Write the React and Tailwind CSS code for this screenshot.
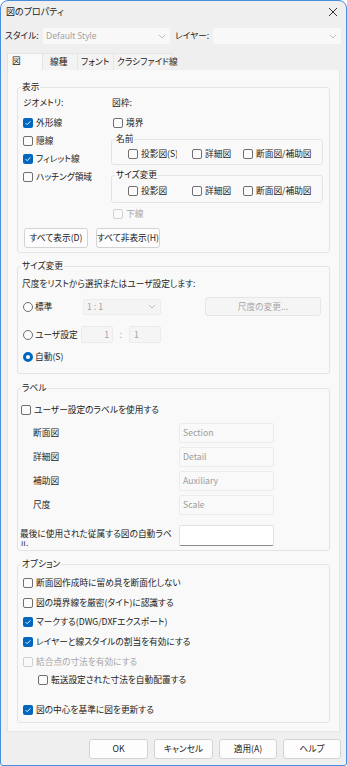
import React from "react";

function Box({ checked, disabled }) {
  if (checked)
    return (
      <span className="w-[10px] h-[10px] rounded-[2px] bg-[#0067c0] flex items-center justify-center shrink-0">
        <svg width="8" height="8" viewBox="0 0 8 8">
          <path d="M1.6 4.1 L3.2 5.7 L6.4 2.3" stroke="white" strokeWidth="0.9" fill="none" />
        </svg>
      </span>
    );
  return (
    <span
      className={
        disabled
          ? "w-[10px] h-[10px] rounded-[2px] border border-[#d0d0d0] bg-[#fafafa] shrink-0"
          : "w-[10px] h-[10px] rounded-[2px] border border-[#6f6f6f] bg-[#fbfbfb] shrink-0"
      }
    />
  );
}

function Check({ label, checked, disabled, className = "", labelClass = "" }) {
  return (
    <div className={"flex items-center gap-[3px] h-[18px] " + className}>
      <Box checked={checked} disabled={disabled} />
      <span className={(disabled ? "text-[#a6a6a6] whitespace-nowrap " : "whitespace-nowrap ") + labelClass}>{label}</span>
    </div>
  );
}

function Radio({ label, selected, className = "" }) {
  return (
    <div className={"flex items-center gap-[2px] " + className}>
      {selected ? (
        <span className="w-[10px] h-[10px] rounded-full border-[3px] border-[#0067c0] bg-white shrink-0" />
      ) : (
        <span className="w-[10px] h-[10px] rounded-full border border-[#6f6f6f] bg-[#fbfbfb] shrink-0" />
      )}
      <span className="whitespace-nowrap">{label}</span>
    </div>
  );
}

function Group({ label, className = "", children }) {
  return (
    <div className={"relative border border-[#e4e4e4] rounded-[3px] " + className}>
      <span className="absolute left-[3px] top-[-7px] px-[1px] bg-[#f9f9f9] leading-[12px] whitespace-nowrap">
        {label}
      </span>
      {children}
    </div>
  );
}

function Chevron() {
  return (
    <svg width="8" height="5" viewBox="0 0 8 5" className="shrink-0">
      <path d="M0.8 0.8 L4 4 L7.2 0.8" stroke="#b8b8b8" strokeWidth="0.9" fill="none" />
    </svg>
  );
}

function Field({ text, className = "" }) {
  return (
    <div
      className={
        "h-[20px] w-[95px] bg-[#f9f9f9] border border-[#ebebeb] rounded-[2px] flex items-center pl-[3px] text-[#9c9c9c] " +
        className
      }
    >
      {text}
    </div>
  );
}

function LabelRow({ label, value }) {
  return (
    <div className="flex items-center mt-[4px] h-[20px]">
      <div className="w-[161px] pl-[15px]">{label}</div>
      <Field text={value} />
    </div>
  );
}

function Btn({ children, className = "" }) {
  return (
    <div
      className={
        "h-[20px] flex items-center justify-center rounded-[3px] border border-[#d3d3d3] bg-[#fdfdfd] whitespace-nowrap " +
        className
      }
    >
      {children}
    </div>
  );
}

export default function App() {
  return (
    <div className="w-[347px] h-[766px] border border-[#4a8ddb] rounded-t-[8px] rounded-b-[3px] bg-[#efefef] overflow-hidden text-[8.7px] leading-[12px] text-[#222222] font-['Noto_Sans_CJK_JP',sans-serif] [font-feature-settings:'palt']">
      {/* title bar */}
      <div className="h-[22px] flex items-center justify-between pl-[5px] pr-[8px]">
        <span className="text-[9px]">図のプロパティ</span>
        <svg width="10" height="10" viewBox="0 0 10 10">
          <path d="M1 1 L9 9 M9 1 L1 9" stroke="#333" strokeWidth="1" />
        </svg>
      </div>

      {/* style row */}
      <div className="flex items-center mt-[5px] h-[16px]">
        <div className="w-[42px] pl-[4px] whitespace-nowrap">スタイル:</div>
        <div className="w-[127px] h-[16px] bg-[#f8f8f8] rounded-[2px] flex items-center justify-between pl-[3px] pr-[4px] text-[#a2a2a2] font-['Noto_Sans',sans-serif] text-[8.5px]">
          <span>Default Style</span>
          <Chevron />
        </div>
        <div className="w-[43px] pl-[5px] whitespace-nowrap">レイヤー:</div>
        <div className="w-[128px] h-[16px] bg-[#f8f8f8] rounded-[2px] flex items-center justify-end pr-[4px]">
          <Chevron />
        </div>
      </div>

      {/* tabs */}
      <div className="flex mt-[9px] pl-[6px] h-[17px] items-stretch">
        <div className="w-[36px] bg-[#f9f9f9] border border-b-0 border-[#e4e4e4] pl-[4px] pt-[1px]">図</div>
        <div className="w-[35px] bg-[#f3f3f3] border-r border-t border-[#e6e6e6] pl-[7px] flex items-center">線種</div>
        <div className="w-[36px] bg-[#f3f3f3] border-r border-t border-[#e6e6e6] pl-[3px] flex items-center">フォント</div>
        <div className="w-[59px] bg-[#f3f3f3] border-r border-t border-[#e6e6e6] pl-[3px] flex items-center whitespace-nowrap">クラシファイド線</div>
      </div>

      {/* tab page */}
      <div className="mx-[6px] h-[662px] bg-[#f9f9f9] border border-t-0 border-[#e6e6e6] px-[9px] pt-[17px]">
        {/* 表示 */}
        <Group label="表示" className="h-[166px]">
          <div className="flex">
            <div className="w-[93px] pl-[5px] pt-[6px]">
              <div className="h-[18px] flex items-center">ジオメトリ:</div>
              <Check label="外形線" checked className="mt-[2px]" />
              <Check label="隠線" />
              <Check label="フィレット線" checked />
              <Check label="ハッチング領域" />
            </div>
            <div className="w-[212px] pt-[6px]">
              <div className="h-[18px] flex items-center pl-[1px]">図枠:</div>
              <Check label="境界" className="mt-[2px] pl-[2px]" />
              <Group label="名前" className="mt-[7px] h-[26px]">
                <div className="flex items-center pt-[4px] h-[24px] pl-[16px]">
                  <Check label="投影図(S)" className="w-[64px]" labelClass="w-[36px] overflow-hidden" />
                  <Check label="詳細図" className="w-[51px]" />
                  <Check label="断面図/補助図" />
                </div>
              </Group>
              <Group label="サイズ変更" className="mt-[10px] h-[28px]">
                <div className="flex items-center pt-[4px] h-[26px] pl-[16px]">
                  <Check label="投影図" className="w-[64px]" />
                  <Check label="詳細図" className="w-[51px]" />
                  <Check label="断面図/補助図" />
                </div>
              </Group>
              <Check label="下線" disabled className="mt-[2px] pl-[2px]" />
            </div>
          </div>
          <div className="flex gap-[8px] pl-[6px] mt-[5px]">
            <Btn className="w-[64px] h-[18px]">すべて表示(D)</Btn>
            <Btn className="w-[64px] h-[18px]">すべて非表示(H)</Btn>
          </div>
        </Group>

        {/* サイズ変更 */}
        <Group label="サイズ変更" className="h-[108px] mt-[13px]">
          <div className="pt-[8px]">
            <div className="h-[18px] flex items-center pl-[4px]">尺度をリストから選択またはユーザ設定します:</div>
            <div className="flex items-center h-[19px] mt-[4px]">
              <Radio label="標準" className="w-[65px] pl-[5px]" />
              <div className="w-[78px] h-[16px] bg-[#f4f4f4] border border-[#ececec] rounded-[2px] flex items-center justify-between pl-[3px] pr-[4px] text-[#a2a2a2]">
                <span>1 : 1</span>
                <Chevron />
              </div>
              <div className="ml-[44px] w-[116px] h-[19px] bg-[#f5f5f5] border border-[#e6e6e6] rounded-[3px] flex items-center justify-center text-[#a6a6a6]">
                尺度の変更...
              </div>
            </div>
            <div className="flex items-center h-[17px] mt-[10px]">
              <Radio label="ユーザ設定" className="w-[63px] pl-[5px]" />
              <div className="w-[32px] h-[17px] bg-[#f5f5f5] border border-[#ebebeb] rounded-[2px] flex items-center justify-end pr-[3px] text-[#a2a2a2]">1</div>
              <div className="w-[16px] text-center text-[#a2a2a2]">:</div>
              <div className="w-[32px] h-[17px] bg-[#f5f5f5] border border-[#ebebeb] rounded-[2px] flex items-center pl-[4px] text-[#a2a2a2]">1</div>
            </div>
            <div className="h-[18px] flex items-center mt-[5px]">
              <Radio label="自動(S)" selected className="pl-[5px]" />
            </div>
          </div>
        </Group>

        {/* ラベル */}
        <Group label="ラベル" className="h-[163px] mt-[14px]">
          <div className="pt-[12px]">
            <Check label="ユーザー設定のラベルを使用する" className="pl-[3px]" />
            <LabelRow label="断面図" value="Section" />
            <LabelRow label="詳細図" value="Detail" />
            <LabelRow label="補助図" value="Auxiliary" />
            <LabelRow label="尺度" value="Scale" />
            <div className="flex items-start mt-[10px]">
              <div className="w-[161px] h-[21px] overflow-hidden pl-[2px] pt-[3px] leading-[11px] whitespace-nowrap">
                最後に使用された従属する図の自動ラベ
                <br />
                ル.
              </div>
              <div className="w-[95px] h-[21px] bg-white border border-[#e2e2e2] border-b-[#8a8a8a] rounded-[2px]" />
            </div>
          </div>
        </Group>

        {/* オプション */}
        <Group label="オプション" className="h-[159px] mt-[13px]">
          <div className="pt-[9px] pl-[5px]">
            <Check label="断面図作成時に留め具を断面化しない" />
            <Check label="図の境界線を厳密(タイト)に認識する" className="mt-[2px]" />
            <Check label="マークする(DWG/DXFエクスポート)" checked className="mt-[1px]" />
            <Check label="レイヤーと線スタイルの割当を有効にする" checked className="mt-[2px]" />
            <Check label="結合点の寸法を有効にする" disabled className="mt-[2px]" />
            <Check label="転送設定された寸法を自動配置する" className="pl-[15px]" />
            <Check label="図の中心を基準に図を更新する" checked className="mt-[12px]" />
          </div>
        </Group>
      </div>

      {/* bottom buttons */}
      <div className="flex justify-end gap-[6px] pr-[5px] mt-[7px]">
        <Btn className="w-[59px] border-[#4a8ddb] border-[1.5px]">OK</Btn>
        <Btn className="w-[59px]">キャンセル</Btn>
        <Btn className="w-[58px]">適用(A)</Btn>
        <Btn className="w-[58px]">ヘルプ</Btn>
      </div>
    </div>
  );
}
